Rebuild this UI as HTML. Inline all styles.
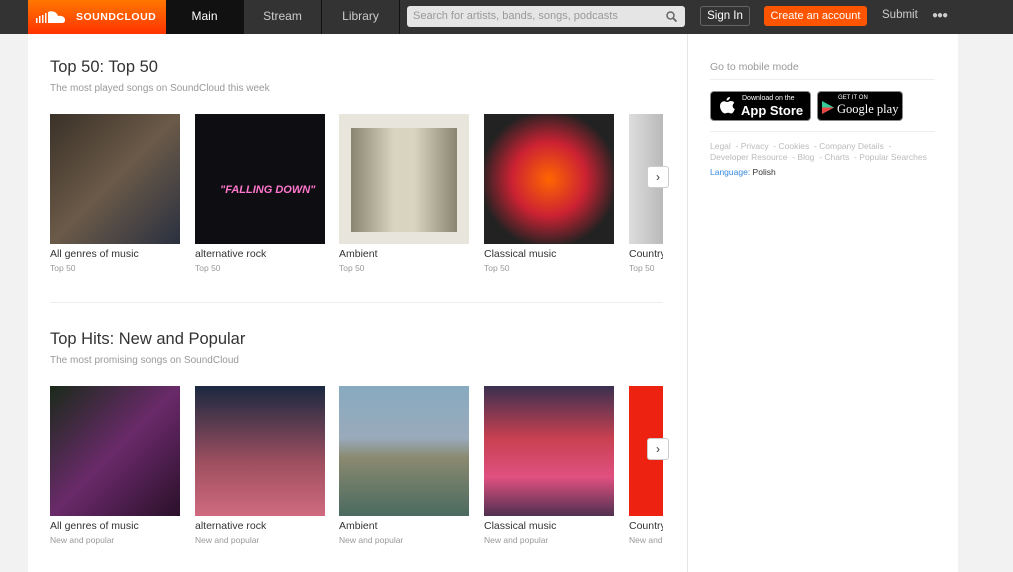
<!DOCTYPE html>
<html><head><style>
*{margin:0;padding:0;box-sizing:border-box}
body{width:1013px;height:572px;overflow:hidden;background:#f2f2f2;font-family:"Liberation Sans",sans-serif;position:relative}
.hdr{position:absolute;left:0;top:0;width:1013px;height:34px;background:#333}
.logo{position:absolute;left:28px;top:0;width:138px;height:34px;background:linear-gradient(#f70,#f30);color:#fff;font-weight:bold;font-size:10.5px;letter-spacing:.5px}
.nav{position:absolute;top:0;height:34px;line-height:32px;color:#ccc;font-size:12px;text-align:center;border-right:1px solid #111}
.main{position:absolute;left:28px;top:34px;width:930px;height:538px;background:#fff}
.div{position:absolute;left:687px;top:34px;width:1px;height:538px;background:#e5e5e5}
h2{position:absolute;left:50px;font-weight:normal;font-size:16.5px;color:#333}
.sub{position:absolute;left:50px;font-size:10px;color:#999}
.t{position:absolute;width:130px;height:130px}
.cap{position:absolute;font-size:10.5px;color:#333;width:130px;white-space:nowrap;overflow:hidden}
.cap2{position:absolute;font-size:8.5px;color:#999;white-space:nowrap;overflow:hidden}
.clip{position:absolute;left:0;top:0;width:663px;height:572px;overflow:hidden}
.arr{position:absolute;left:647px;width:22px;height:22px;background:#fff;border:1px solid #ccc;border-radius:3px;font-size:12px;text-align:center;line-height:20px;color:#333}
.side{position:absolute;font-size:10px;color:#999}
.badge{position:absolute;top:91px;height:30px;background:#000;border:1px solid #888;border-radius:4px;color:#fff}
</style></head><body>
<div class="hdr"></div>
<div class="logo"><svg style="position:absolute;left:8px;top:9px" width="32" height="16"><g fill="#fff"><rect x="0" y="9" width="1.5" height="5"/><rect x="3" y="7" width="1.5" height="7"/><rect x="6" y="6" width="1.5" height="8"/><rect x="9" y="4" width="1.5" height="10"/><path d="M12 14V3c4-2 9 0 10 4 4-1 7 1 7 4s-2 3-4 3z"/></g></svg><span style="position:absolute;left:48px;top:11px">SOUNDCLOUD</span></div>
<div class="nav" style="left:166px;width:78px;background:#111;color:#fff">Main</div>
<div class="nav" style="left:244px;width:78px">Stream</div>
<div class="nav" style="left:322px;width:78px">Library</div>
<div style="position:absolute;left:407px;top:6px;width:278px;height:21px;background:#e5e5e5;border-radius:3px;font-size:11px;color:#999;line-height:21px;padding-left:6px">Search for artists, bands, songs, podcasts<svg style="position:absolute;right:8px;top:5px" width="11" height="11"><circle cx="4.5" cy="4.5" r="3.5" fill="none" stroke="#666" stroke-width="1.5"/><path d="M7 7l3.5 3.5" stroke="#666" stroke-width="1.8"/></svg></div>
<div style="position:absolute;left:700px;top:6px;width:50px;height:20px;border:1px solid #666;border-radius:3px;color:#fff;font-size:11.5px;text-align:center;line-height:18px">Sign In</div>
<div style="position:absolute;left:764px;top:6px;width:103px;height:20px;background:#f50;border-radius:3px;color:#fff;font-size:11px;text-align:center;line-height:20px">Create an account</div>
<div style="position:absolute;left:882px;top:9px;color:#ccc;font-size:11.5px">Submit</div>
<div style="position:absolute;left:932px;top:10px;color:#ccc;font-size:10px;letter-spacing:-1px">●●●</div>
<div class="main"></div><div class="div"></div>
<div class="clip">
<h2 style="top:58px">Top 50: Top 50</h2>
<div class="sub" style="top:83px">The most played songs on SoundCloud this week</div>
<div class="t" style="left:50px;top:114px;background:linear-gradient(135deg,#3a3128,#6b5a48 50%,#2a3040)"></div>
<div class="t" style="left:195px;top:114px;background:#0d0d12"><div style="position:absolute;left:25px;top:70px;color:#f7c;font-weight:bold;font-size:11px;font-style:italic">"FALLING DOWN"</div></div>
<div class="t" style="left:339px;top:114px;background:#e8e6dc"><div style="position:absolute;left:12px;top:14px;width:106px;height:104px;background:linear-gradient(90deg,#8a8570,#d8d4c0 40%,#d8d4c0 60%,#8a8570)"></div></div>
<div class="t" style="left:484px;top:114px;background:radial-gradient(ellipse at 50% 50%,#f60,#c23 40%,#222 75%)"></div>
<div class="t" style="left:629px;top:114px;background:linear-gradient(90deg,#ddd,#555)"></div>
<div class="cap" style="left:50px;top:248px">All genres of music</div><div class="cap2" style="left:50px;top:263px">Top 50</div>
<div class="cap" style="left:195px;top:248px">alternative rock</div><div class="cap2" style="left:195px;top:263px">Top 50</div>
<div class="cap" style="left:339px;top:248px">Ambient</div><div class="cap2" style="left:339px;top:263px">Top 50</div>
<div class="cap" style="left:484px;top:248px">Classical music</div><div class="cap2" style="left:484px;top:263px">Top 50</div>
<div class="cap" style="left:629px;top:248px">Country</div><div class="cap2" style="left:629px;top:263px">Top 50</div>
<div style="position:absolute;left:50px;top:302px;width:613px;height:1px;background:#eee"></div>
<h2 style="top:330px">Top Hits: New and Popular</h2>
<div class="sub" style="top:355px">The most promising songs on SoundCloud</div>
<div class="t" style="left:50px;top:386px;background:linear-gradient(135deg,#1a2a1a,#6a2a6a 50%,#2a102a)"></div>
<div class="t" style="left:195px;top:386px;background:linear-gradient(180deg,#1a2840,#a05060 60%,#d06a80)"></div>
<div class="t" style="left:339px;top:386px;background:linear-gradient(180deg,#88aac0,#9ab 40%,#8a8a70 55%,#4a6a60)"></div>
<div class="t" style="left:484px;top:386px;background:linear-gradient(180deg,#3a3050,#c84050 40%,#e05080 70%,#503050)"></div>
<div class="t" style="left:629px;top:386px;background:#e21"></div>
<div class="cap" style="left:50px;top:520px">All genres of music</div><div class="cap2" style="left:50px;top:535px">New and popular</div>
<div class="cap" style="left:195px;top:520px">alternative rock</div><div class="cap2" style="left:195px;top:535px">New and popular</div>
<div class="cap" style="left:339px;top:520px">Ambient</div><div class="cap2" style="left:339px;top:535px">New and popular</div>
<div class="cap" style="left:484px;top:520px">Classical music</div><div class="cap2" style="left:484px;top:535px">New and popular</div>
<div class="cap" style="left:629px;top:520px">Country</div><div class="cap2" style="left:629px;top:535px">New and popular</div>
</div>
<div class="arr" style="top:166px">›</div>
<div class="arr" style="top:438px">›</div>
<div class="side" style="left:710px;top:61px;font-size:10.5px">Go to mobile mode</div>
<div style="position:absolute;left:710px;top:79px;width:225px;height:1px;background:#eee"></div>
<div class="badge" style="left:710px;width:101px"><svg style="position:absolute;left:8px;top:5px" width="16" height="19"><path d="M11 0c0 2-1.5 3.5-3.5 3.5C7.5 1.5 9 0 11 0zM8 5c1.5 0 2.5-1 4-1 1.5 0 2.7.8 3.3 2-2.5 1.3-2 5 .5 6-.7 2-2 4.5-3.5 4.5-1.2 0-1.6-.7-3.2-.7S7 16.5 5.8 16.5C4 16.5 1 13 1 9.3 1 6 3 4.2 5 4.2 6.3 4.2 7 5 8 5z" fill="#fff"/></svg><span style="position:absolute;left:31px;top:3px;font-size:7px">Download on the</span><span style="position:absolute;left:30px;top:11px;font-size:13px;font-weight:bold">App Store</span></div>
<div class="badge" style="left:817px;width:86px"><svg style="position:absolute;left:4px;top:9px" width="12" height="13"><path d="M0 0L12 6.5 0 13z" fill="#3c9"/><path d="M0 6.5L12 6.5 0 13z" fill="#e44"/></svg><span style="position:absolute;left:20px;top:3px;font-size:6px">GET IT ON</span><span style="position:absolute;left:19px;top:10px;font-size:12.5px;font-family:'Liberation Serif',serif">Google play</span></div>
<div style="position:absolute;left:710px;top:131px;width:225px;height:1px;background:#eee"></div>
<div class="side" style="left:710px;top:141px;font-size:8.5px;color:#bbb;line-height:11px">Legal &nbsp;- Privacy &nbsp;- Cookies &nbsp;- Company Details &nbsp;-<br>Developer Resource &nbsp;- Blog &nbsp;- Charts &nbsp;- Popular Searches</div>
<div class="side" style="left:710px;top:167px;font-size:8.5px;color:#333"><span style="color:#38d">Language:</span> Polish</div>
</body></html>
